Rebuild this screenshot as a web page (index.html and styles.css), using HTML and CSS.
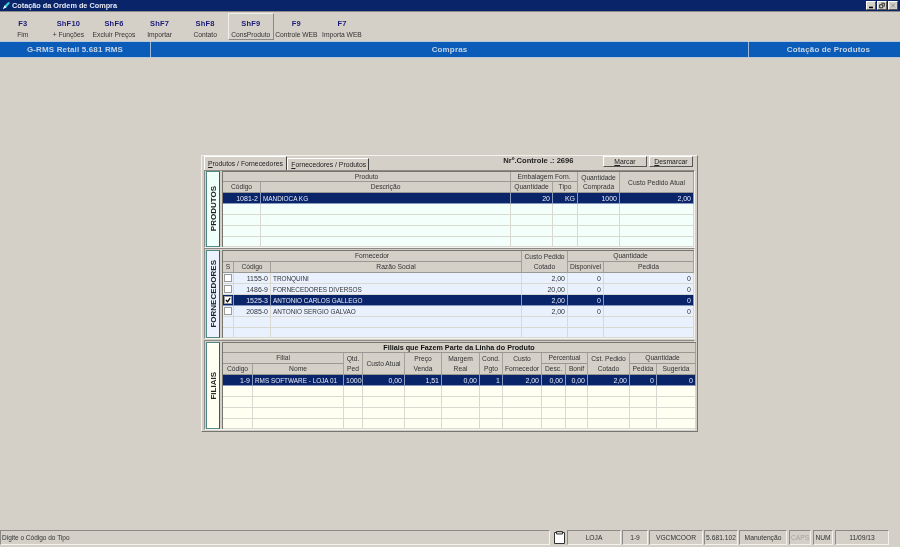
FILE: index.html
```html
<!DOCTYPE html>
<html lang="pt">
<head>
<meta charset="utf-8">
<title>Cotação da Ordem de Compra</title>
<link rel="stylesheet" href="styles.css">
</head>
<body>
<div class="app">
  <header class="titlebar">
    <svg class="appicon" viewBox="0 0 10 10"><path d="M1 9 L3 5 L7 1 L9 2 L5 7 Z" fill="#35d0d8"/><path d="M1 9 L3 5 L5 7 Z" fill="#fff"/></svg>
    <span class="title">Cotação da Ordem de Compra</span>
    <div class="winbtns">
      <span class="winbtn"><svg viewBox="0 0 9 9"><rect x="2" y="6" width="5" height="2" fill="#000"/></svg></span>
      <span class="winbtn"><svg viewBox="0 0 9 9"><path d="M3.5 1.5h4v4h-1M1.5 3.5h4v4h-4z" fill="none" stroke="#000"/></svg></span>
      <span class="winbtn off"><svg viewBox="0 0 9 9"><path d="M2 2l5 5M7 2l-5 5" stroke="#888" stroke-width="1.2"/></svg></span>
    </div>
  </header>

  <nav class="toolbar">
    <div class="tool"><b>F3</b><span>Fim</span></div>
    <div class="tool"><b>ShF10</b><span>+ Funções</span></div>
    <div class="tool"><b>ShF6</b><span>Excluir Preços</span></div>
    <div class="tool"><b>ShF7</b><span>Importar</span></div>
    <div class="tool"><b>ShF8</b><span>Contato</span></div>
    <div class="tool hot"><b>ShF9</b><span>ConsProduto</span></div>
    <div class="tool"><b>F9</b><span>Controle WEB</span></div>
    <div class="tool"><b>F7</b><span>Importa WEB</span></div>
  </nav>

  <div class="banner">
    <div class="bcell bleft">G-RMS Retail 5.681 RMS</div>
    <div class="bcell bmid">Compras</div>
    <div class="bcell bright">Cotação de Produtos</div>
  </div>

  <main class="desk">
    <div class="panel">
      <div class="tabrow">
        <div class="tab active"><u>P</u>rodutos / Fornecedores</div>
        <div class="tab"><u>F</u>ornecedores / Produtos</div>
        <div class="control">Nrº.Controle .: 2696</div>
        <div class="btn"><u>M</u>arcar</div>
        <div class="btn"><u>D</u>esmarcar</div>
      </div>

      <section class="sec">
        <div class="side mint"><span>PRODUTOS</span></div>
        <div class="gridwrap">
          <table class="grid g1">
            <colgroup><col class="c38"><col class="c250"><col class="c42"><col class="c25"><col class="c42"><col class="c74"></colgroup>
            <thead>
              <tr class="h10"><th colspan="2">Produto</th><th colspan="2">Embalagem Forn.</th><th rowspan="2">Quantidade<br>Comprada</th><th rowspan="2">Custo Pedido Atual</th></tr>
              <tr class="h11"><th>Código</th><th>Descrição</th><th>Quantidade</th><th>Tipo</th></tr>
            </thead>
            <tbody>
              <tr class="sel"><td class="n">1081-2</td><td>MANDIOCA KG</td><td class="n">20</td><td class="n">KG</td><td class="n">1000</td><td class="n">2,00</td></tr>
              <tr><td></td><td></td><td></td><td></td><td></td><td></td></tr>
              <tr><td></td><td></td><td></td><td></td><td></td><td></td></tr>
              <tr><td></td><td></td><td></td><td></td><td></td><td></td></tr>
              <tr class="h10"><td></td><td></td><td></td><td></td><td></td><td></td></tr>
            </tbody>
          </table>
        </div>
      </section>

      <section class="sec">
        <div class="side blue"><span>FORNECEDORES</span></div>
        <div class="gridwrap">
          <table class="grid g2">
            <colgroup><col class="c11"><col class="c37"><col class="c251"><col class="c46"><col class="c36"><col class="c90"></colgroup>
            <thead>
              <tr class="h11"><th colspan="3">Fornecedor</th><th rowspan="2">Custo Pedido<br>Cotado</th><th colspan="2">Quantidade</th></tr>
              <tr class="h11"><th>S</th><th>Código</th><th>Razão Social</th><th>Disponível</th><th>Pedida</th></tr>
            </thead>
            <tbody>
              <tr><td class="box"><i class="chk"></i></td><td class="n">1155-0</td><td>TRONQUINI</td><td class="n">2,00</td><td class="n">0</td><td class="n">0</td></tr>
              <tr><td class="box"><i class="chk"></i></td><td class="n">1486-9</td><td>FORNECEDORES DIVERSOS</td><td class="n">20,00</td><td class="n">0</td><td class="n">0</td></tr>
              <tr class="sel"><td class="box"><i class="chk"><svg viewBox="0 0 7 7"><path d="M1 3.5 L3 5.5 L6 1.2" fill="none" stroke="#000" stroke-width="1.5"/></svg></i></td><td class="n">1525-3</td><td>ANTONIO CARLOS GALLEGO</td><td class="n">2,00</td><td class="n">0</td><td class="n">0</td></tr>
              <tr><td class="box"><i class="chk"></i></td><td class="n">2085-0</td><td>ANTONIO SERGIO GALVAO</td><td class="n">2,00</td><td class="n">0</td><td class="n">0</td></tr>
              <tr><td></td><td></td><td></td><td></td><td></td><td></td></tr>
              <tr class="h10"><td></td><td></td><td></td><td></td><td></td><td></td></tr>
            </tbody>
          </table>
        </div>
      </section>

      <section class="sec">
        <div class="side cream"><span>FILIAIS</span></div>
        <div class="gridwrap">
          <table class="grid g3">
            <colgroup><col class="c30"><col class="c91"><col class="c19"><col class="c42"><col class="c37"><col class="c38"><col class="c23"><col class="c39"><col class="c24"><col class="c22"><col class="c42"><col class="c27"><col class="c39"></colgroup>
            <thead>
              <tr class="h10"><th colspan="13" class="strong">Filiais que Fazem Parte da Linha do Produto</th></tr>
              <tr class="h11"><th colspan="2">Filial</th><th rowspan="2">Qtd.<br>Ped</th><th rowspan="2">Custo Atual</th><th rowspan="2">Preço<br>Venda</th><th rowspan="2">Margem<br>Real</th><th rowspan="2">Cond.<br>Pgto</th><th rowspan="2">Custo<br>Fornecedor</th><th colspan="2">Percentual</th><th rowspan="2">Cst. Pedido<br>Cotado</th><th colspan="2">Quantidade</th></tr>
              <tr class="h11"><th>Código</th><th>Nome</th><th>Desc.</th><th>Bonif</th><th>Pedida</th><th>Sugerida</th></tr>
            </thead>
            <tbody>
              <tr class="sel"><td class="n">1-9</td><td>RMS SOFTWARE - LOJA 01</td><td class="n">1000</td><td class="n">0,00</td><td class="n">1,51</td><td class="n">0,00</td><td class="n">1</td><td class="n">2,00</td><td class="n">0,00</td><td class="n">0,00</td><td class="n">2,00</td><td class="n">0</td><td class="n">0</td></tr>
              <tr><td></td><td></td><td></td><td></td><td></td><td></td><td></td><td></td><td></td><td></td><td></td><td></td><td></td></tr>
              <tr><td></td><td></td><td></td><td></td><td></td><td></td><td></td><td></td><td></td><td></td><td></td><td></td><td></td></tr>
              <tr><td></td><td></td><td></td><td></td><td></td><td></td><td></td><td></td><td></td><td></td><td></td><td></td><td></td></tr>
              <tr class="h10"><td></td><td></td><td></td><td></td><td></td><td></td><td></td><td></td><td></td><td></td><td></td><td></td><td></td></tr>
            </tbody>
          </table>
        </div>
      </section>
    </div>
  </main>

  <footer class="status">
    <div class="st st-msg">Digite o Código do Tipo</div>
    <div class="st-icon"><svg viewBox="0 0 15 15"><path d="M2.5 2.5h10v11h-10z" fill="#fff" stroke="#333"/><path d="M4.5 1.5h6v2.5h-6z" fill="#d4d0c8" stroke="#333"/></svg></div>
    <div class="st st-loja">LOJA</div>
    <div class="st st-fil">1-9</div>
    <div class="st st-user">VGCMCOOR</div>
    <div class="st st-ver">5.681.102</div>
    <div class="st st-mod">Manutenção</div>
    <div class="st st-caps">CAPS</div>
    <div class="st st-num">NUM</div>
    <div class="st st-date">11/09/13</div>
  </footer>
</div>
</body>
</html>
```
FILE: styles.css
```css
* { box-sizing: border-box; }
html, body { margin: 0; padding: 0; }
body {
  width: 900px;
  height: 547px;
  overflow: hidden;
  background: #d4d0c8;
  color: #222;
  font: 6.8px/9px "Liberation Sans", Arial, sans-serif;
}
.app { display: flex; flex-direction: column; height: 547px; will-change: transform; }

/* title bar */
.titlebar {
  flex: 0 0 12px;
  display: flex;
  align-items: center;
  background: #0a246a;
  border-bottom: 1px solid #8c8a86;
  color: #e4e8f2;
  padding-left: 2px;
}
.appicon { width: 9px; height: 9px; margin-right: 1px; }
.title { font-weight: bold; font-size: 7.3px; }
.winbtns { margin-left: auto; display: flex; gap: 1px; padding-right: 2px; }
.winbtn {
  width: 10px; height: 9px;
  background: #d4d0c8;
  border: 1px solid;
  border-color: #fff #555 #555 #fff;
  display: flex;
}
.winbtn svg { width: 100%; height: 100%; }

/* toolbar */
.toolbar { flex: 0 0 29px; display: flex; padding-top: 1px; }
.tool {
  width: 45.6px;
  height: 27px;
  display: flex;
  flex-direction: column;
  align-items: center;
  padding-top: 5px;
  gap: 2px;
  border: 1px solid transparent;
  white-space: nowrap;
}
.tool b { color: #1a1a78; font-size: 7.5px; letter-spacing: .2px; }
.tool span { font-size: 6.7px; color: #333; }
.tool.hot { border-color: #f2f0ec #8c8a86 #8c8a86 #f2f0ec; }

/* blue band */
.banner {
  flex: 0 0 17px;
  display: flex;
  background: #0a5cb8;
  border-top: 1px solid #b8c8dc;
  border-bottom: 1px solid #b8c8dc;
  color: #c8d4e4;
  font-weight: bold;
  font-size: 8px;
  line-height: 15px;
  letter-spacing: .15px;
}
.bcell { text-align: center; }
.bleft { width: 151px; border-right: 1px solid #9db8d8; }
.bmid { flex: 1; border-right: 1px solid #9db8d8; }
.bright { width: 151px; padding-left: 8px; }

/* centre */
.desk { flex: 1; display: flex; align-items: center; justify-content: center; padding: 0 1px 1px 0; }
.panel {
  width: 497px;
  height: 277px;
  padding: 0 2px;
  background: #d4d0c8;
  border: 1px solid;
  border-color: #f4f2ee #77756f #77756f #f4f2ee;
}
.tabrow { display: flex; align-items: flex-start; height: 14px; }
.tab {
  height: 12px;
  margin-top: 2px;
  padding: 1px 3px 0 3px;
  border-top: 1px solid #fff;
  border-left: 1px solid #fff;
  border-right: 1px solid #404040;
  white-space: nowrap;
}
.tab.active { width: 85px; height: 14px; margin-top: 0; padding-top: 2px; }
.tab + .tab { width: 82px; }
.control { margin-left: 134px; font-weight: bold; width: 102px; font-size: 7.6px; white-space: nowrap; }
.btn {
  width: 45px; height: 11px;
  margin-right: 2px;
  text-align: center;
  line-height: 9px;
  border: 1px solid;
  border-color: #fff #555 #555 #fff;
}

.sec {
  display: flex;
  gap: 2px;
  width: 491px;
  padding: 0 0 0 1px;
  border: 1px solid;
  border-color: #8c8a86 #f4f2ee #f4f2ee #8c8a86;
}
.sec + .sec { padding-top: 1px; }
.sec + .sec + .sec { margin-top: 1px; }
.side {
  flex: none;
  width: 14px;
  display: flex;
  align-items: center;
  justify-content: center;
  border: 1px solid #4f8a86;
  border-right-color: #2f5f5c;
  color: #222;
  font-weight: bold;
  font-size: 8px;
}
.side span { writing-mode: vertical-rl; transform: rotate(180deg); white-space: nowrap; }
.mint { background: #effff9; }
.blue { background: #ecf2ff; }
.cream { background: #fffff2; }

.gridwrap { flex: none; border-top: 1px solid #77756f; border-left: 1px solid #77756f; }
.grid {
  table-layout: fixed;
  border-collapse: separate;
  border-spacing: 0;
  width: 471px;
}
.g3 { width: 473px; }
.grid tr { height: 11px; }
.grid tr.h10 { height: 10px; }
.grid th, .grid td { padding: 0; overflow: hidden; white-space: nowrap; }
.grid th {
  font-weight: normal;
  background: #d4d0c8;
  text-align: center;
  line-height: 10px;
  font-size: 6.7px;
  border-right: 1px solid #a3a19c;
  border-bottom: 1px solid #9a9893;
  color: #333;
}
.grid tr.h10 th { line-height: 9px; }
.grid th.strong { font-weight: bold; color: #111; font-size: 7.2px; }
.grid td {
  border-right: 1px solid #d9d9d2;
  border-bottom: 1px solid #d9d9d2;
  padding: 0 1px 0 2px;
  line-height: 9px;
  font-size: 6.4px;
  color: #333;
}
.grid td.n { text-align: right; padding-right: 2px; font-size: 7px; }
.grid td.box { padding: 0 0 0 1px; }
.g1 td { background: #f2fffa; }
.g2 td { background: #e9f1ff; }
.g3 td { background: #fffff2; }
.grid .sel td { background: #0a246a; color: #e8ecf6; border-right-color: #8a9abf; border-bottom-color: #8a9abf; }

.chk {
  display: block;
  width: 8px;
  height: 8px;
  background: #fff;
  border: 1px solid #9a9a9a;
}
.chk svg { display: block; width: 6px; height: 6px; }

col.c11 { width: 11px; } col.c19 { width: 19px; } col.c22 { width: 22px; } col.c23 { width: 23px; }
col.c24 { width: 24px; } col.c25 { width: 25px; } col.c27 { width: 27px; } col.c30 { width: 30px; }
col.c36 { width: 36px; } col.c37 { width: 37px; } col.c38 { width: 38px; } col.c39 { width: 39px; }
col.c42 { width: 42px; } col.c46 { width: 46px; } col.c74 { width: 74px; } col.c90 { width: 90px; }
col.c91 { width: 91px; } col.c250 { width: 250px; } col.c251 { width: 251px; }

/* status */
.status { flex: 0 0 17px; display: flex; align-items: flex-start; }
.st {
  height: 15px;
  line-height: 13px;
  text-align: center;
  white-space: nowrap;
  border: 1px solid;
  border-color: #8c8a86 #f4f2ee #f4f2ee #8c8a86;
  font-size: 6.7px;
  color: #333;
}
.st-msg { width: 550px; text-align: left; padding-left: 1px; font-size: 6.5px; }
.st-icon { width: 15px; height: 15px; margin-left: 2px; }
.st-icon svg { display: block; width: 15px; height: 15px; }
.st-loja { width: 54px; }
.st-fil { width: 26px; margin-left: 1px; }
.st-user { width: 54px; margin-left: 1px; }
.st-ver { width: 34px; margin-left: 1px; }
.st-mod { width: 48px; margin-left: 1px; }
.st-caps { width: 22px; margin-left: 2px; color: #a5a39e; }
.st-num { width: 20px; margin-left: 2px; }
.st-date { width: 54px; margin-left: 2px; }
```
